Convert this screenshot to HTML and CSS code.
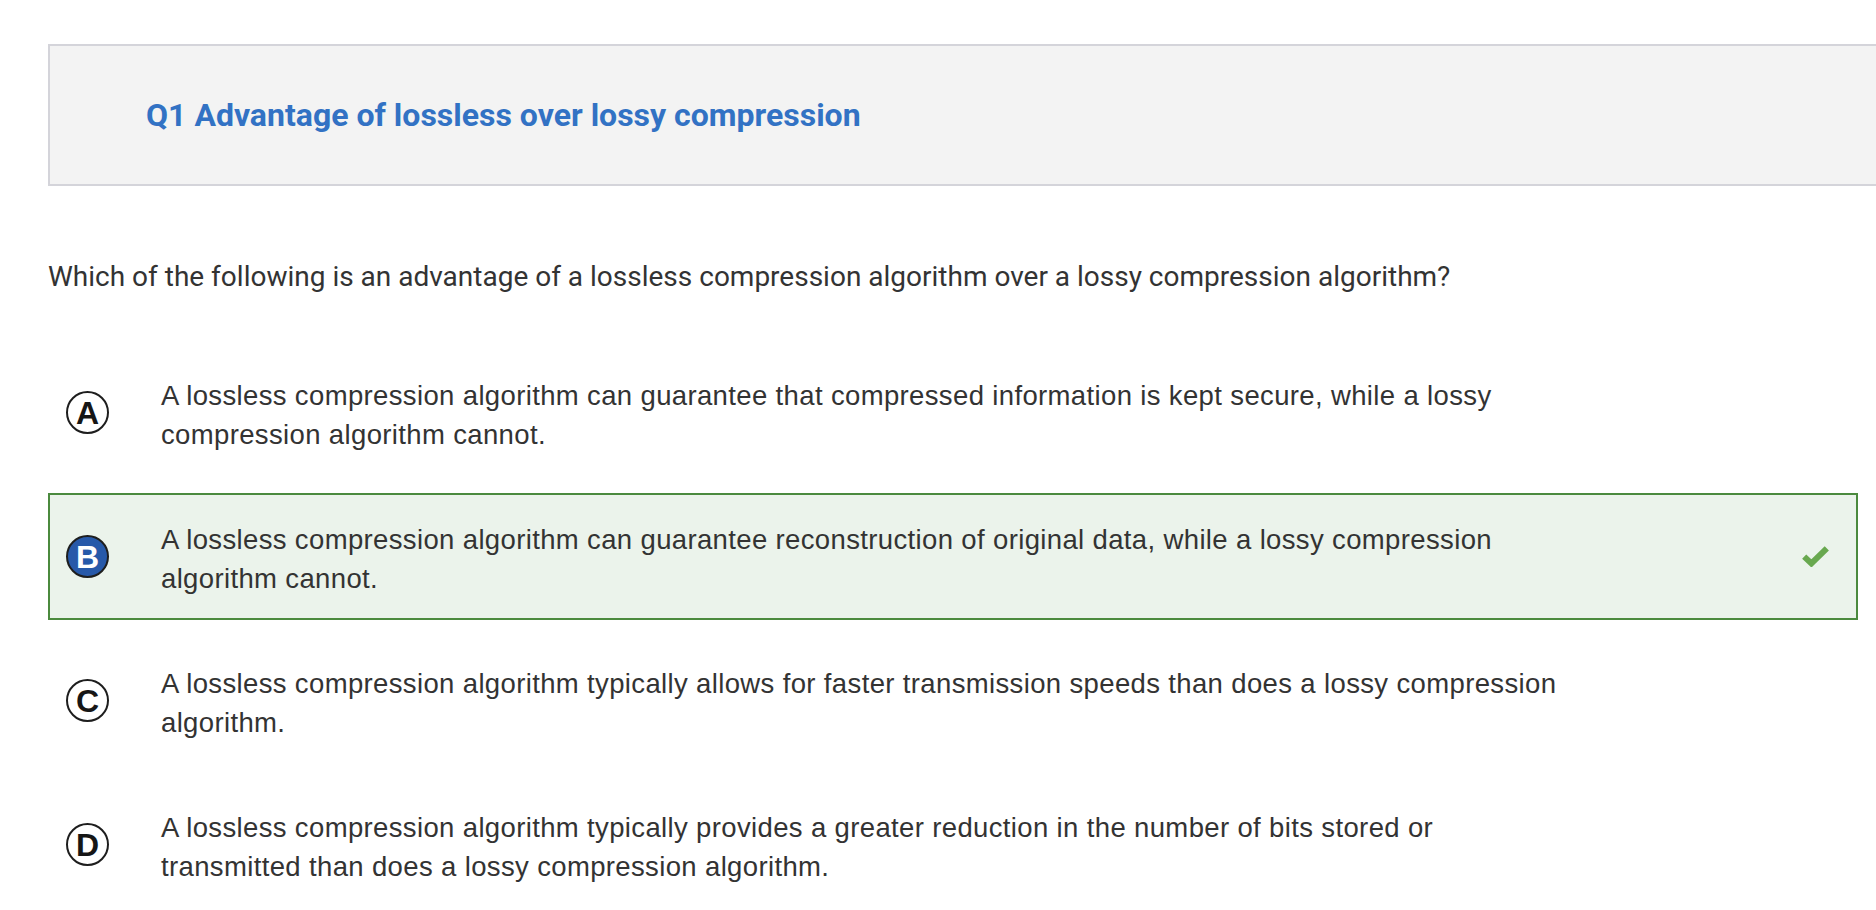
FILE: index.html
```html
<!DOCTYPE html>
<html lang="en">
<head>
<meta charset="utf-8">
<title>Q1 Advantage of lossless over lossy compression</title>
<link rel="stylesheet" href="styles.css">
</head>
<body>
<main class="page">
  <header class="q-header">
    <h1 class="q-title">Q1 Advantage of lossless over lossy compression</h1>
  </header>
  <p class="q-stem">Which of the following is an advantage of a lossless compression algorithm over a lossy compression algorithm?</p>
  <ul class="options">
    <li class="option">
      <span class="badge">A</span>
      <span class="opt-text">A lossless compression algorithm can guarantee that compressed information is kept secure, while a lossy compression algorithm cannot.</span>
    </li>
    <li class="option option--correct">
      <span class="badge badge--selected">B</span>
      <span class="opt-text">A lossless compression algorithm can guarantee reconstruction of original data, while a lossy compression algorithm cannot.</span>
      <svg class="check" viewBox="0 0 27 21" width="27" height="21" aria-hidden="true">
        <polyline points="2.2,10.6 9.4,17.4 24.8,2.4" fill="none" stroke="#68a84f" stroke-width="6"/>
      </svg>
    </li>
    <li class="option">
      <span class="badge">C</span>
      <span class="opt-text">A lossless compression algorithm typically allows for faster transmission speeds than does a lossy compression algorithm.</span>
    </li>
    <li class="option">
      <span class="badge">D</span>
      <span class="opt-text">A lossless compression algorithm typically provides a greater reduction in the number of bits stored or transmitted than does a lossy compression algorithm.</span>
    </li>
  </ul>
</main>
</body>
</html>
```
FILE: styles.css
```css
html, body {
  margin: 0;
  padding: 0;
  background: #ffffff;
  overflow: hidden;
}

.page {
  padding: 44px 18px 0 48px;
}

.q-header {
  margin-right: -80px;
  height: 138px;
  background: #f3f3f3;
  border: 2px solid #d4d4da;
  display: flex;
  align-items: center;
  padding-left: 96px;
}

.q-title {
  margin: 0;
  font-family: Roboto, "Liberation Sans", sans-serif;
  font-weight: 700;
  font-size: 32px;
  line-height: 38px;
  color: #3272c4;
}

.q-stem {
  margin: 73px 0 0 0;
  font-family: Roboto, "Liberation Sans", sans-serif;
  font-weight: 400;
  font-size: 28px;
  line-height: 35px;
  color: #333333;
}

.options {
  list-style: none;
  margin: 55px 0 0 0;
  padding: 0;
  display: flex;
  flex-direction: column;
  gap: 17px;
}

.option {
  height: 123px;
  border: 2px solid transparent;
  display: flex;
  align-items: center;
  padding: 0 27px 0 16px;
}

.option--correct {
  border-color: #4b8a3e;
  background: #ebf3eb;
}

.badge {
  flex: none;
  width: 39px;
  height: 38px;
  padding-top: 1px;
  border: 2px solid #1e1e1e;
  border-radius: 50%;
  background: #ffffff;
  color: #161616;
  display: flex;
  align-items: center;
  justify-content: center;
  font-family: "Liberation Sans", Arial, sans-serif;
  font-weight: 700;
  font-size: 32px;
  line-height: 1;
}

.badge--selected {
  background: #2759a9;
  color: #ffffff;
}

.opt-text {
  margin: 4px 0 0 52px;
  width: 1406px;
  font-family: "Liberation Sans", Arial, sans-serif;
  font-size: 27.5px;
  letter-spacing: 0.36px;
  line-height: 39px;
  color: #333333;
}

.check {
  margin-left: auto;
  display: block;
}
```
